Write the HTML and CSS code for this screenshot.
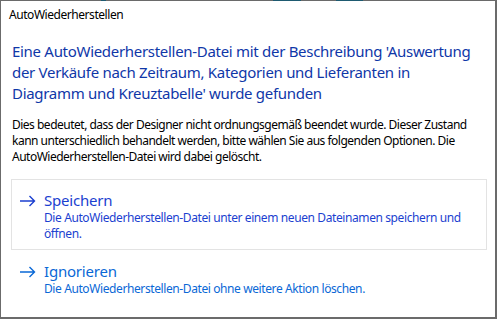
FILE: index.html
```html
<!DOCTYPE html>
<html lang="de">
<head>
<meta charset="utf-8">
<title>AutoWiederherstellen</title>
<link rel="stylesheet" href="styles.css">
</head>
<body>
<div class="window">
  <div class="topline"></div>
  <div class="titlebar">AutoWiederherstellen</div>
  <div class="content">
    <h1 class="instruction">Eine AutoWiederherstellen-Datei mit der Beschreibung 'Auswertung<br>der Verkäufe nach Zeitraum, Kategorien und Lieferanten in<br>Diagramm und Kreuztabelle' wurde gefunden</h1>
    <p class="message">Dies bedeutet, dass der Designer nicht ordnungsgemäß beendet wurde. Dieser Zustand<br>kann unterschiedlich behandelt werden, bitte wählen Sie aus folgenden Optionen. Die<br>AutoWiederherstellen-Datei wird dabei gelöscht.</p>
    <div class="links">
      <a class="cmd cmd-hover" href="#">
        <span class="arrow"><svg width="17" height="12" viewBox="0 0 17 12"><path d="M1 6H15.5M10.5 1L15.5 6L10.5 11" fill="none" stroke="currentColor" stroke-width="1.4"/></svg></span>
        <span class="cmd-text">
          <span class="cmd-title">Speichern</span>
          <span class="cmd-desc">Die AutoWiederherstellen-Datei unter einem neuen Dateinamen speichern und<br>öffnen.</span>
        </span>
      </a>
      <a class="cmd" href="#">
        <span class="arrow"><svg width="17" height="12" viewBox="0 0 17 12"><path d="M1 6H15.5M10.5 1L15.5 6L10.5 11" fill="none" stroke="currentColor" stroke-width="1.4"/></svg></span>
        <span class="cmd-text">
          <span class="cmd-title">Ignorieren</span>
          <span class="cmd-desc">Die AutoWiederherstellen-Datei ohne weitere Aktion löschen.</span>
        </span>
      </a>
    </div>
  </div>
</div>
</body>
</html>
```
FILE: styles.css
```css
* { box-sizing: border-box; }
html, body { margin: 0; padding: 0; background: #ffffff; }
body {
  font-family: "Noto Sans", "Open Sans", sans-serif;
  color: #000;
  width: 497px;
  height: 319px;
  overflow: hidden;
}
.window {
  width: 497px;
  height: 319px;
  background: #fff;
  border-left: 1px solid #6b6b6b;
  border-right: 2px solid #6b6b6b;
  border-bottom: 2px solid #6b6b6b;
  display: flex;
  flex-direction: column;
}
.topline {
  height: 1px;
  background: linear-gradient(to right,
    #6a6a6a 0, #6a6a6a 100px,
    #1e5a70 100px, #1e5a70 105px,
    #6a6a6a 105px, #6a6a6a 272px,
    #1e5a70 272px, #1e5a70 300px,
    #6a6a6a 300px, #6a6a6a 335px,
    #1e5a70 335px, #1e5a70 362px,
    #6a6a6a 362px);
}
.titlebar {
  font-size: 12px;
  line-height: 16px;
  padding: 6px 8px 0;
  height: 22px;
  letter-spacing: -0.45px;
  white-space: nowrap;
}
.content {
  padding: 18px 9px 0 11px;
}
.instruction {
  margin: 0;
  font-weight: normal;
  font-size: 15px;
  line-height: 21px;
  color: #0f37a8;
  letter-spacing: -0.3px;
  white-space: nowrap;
}
.message {
  margin: 13px 0 0;
  font-size: 12px;
  line-height: 16px;
  letter-spacing: -0.5px;
  white-space: nowrap;
}
.links {
  margin: 14px 0 0 -1px;
  display: flex;
  flex-direction: column;
  width: 476px;
}
.cmd {
  display: flex;
  align-items: flex-start;
  gap: 8px;
  padding: 10px 7px 9px 7px;
  border: 1px solid transparent;
  text-decoration: none;
  color: #0a68d6;
}
.cmd-hover {
  border-color: #e3e3e3;
  color: #1b3fd0;
  padding-bottom: 7px;
}
.arrow {
  display: flex;
  align-items: center;
  height: 21px;
  width: 17px;
  flex: none;
}
.arrow svg { display: block; }
.cmd-text {
  display: flex;
  flex-direction: column;
}
.cmd-title {
  font-size: 15px;
  line-height: 20px;
  letter-spacing: -0.2px;
}
.cmd-desc {
  font-size: 12px;
  line-height: 16px;
  letter-spacing: -0.4px;
  white-space: nowrap;
}
```
